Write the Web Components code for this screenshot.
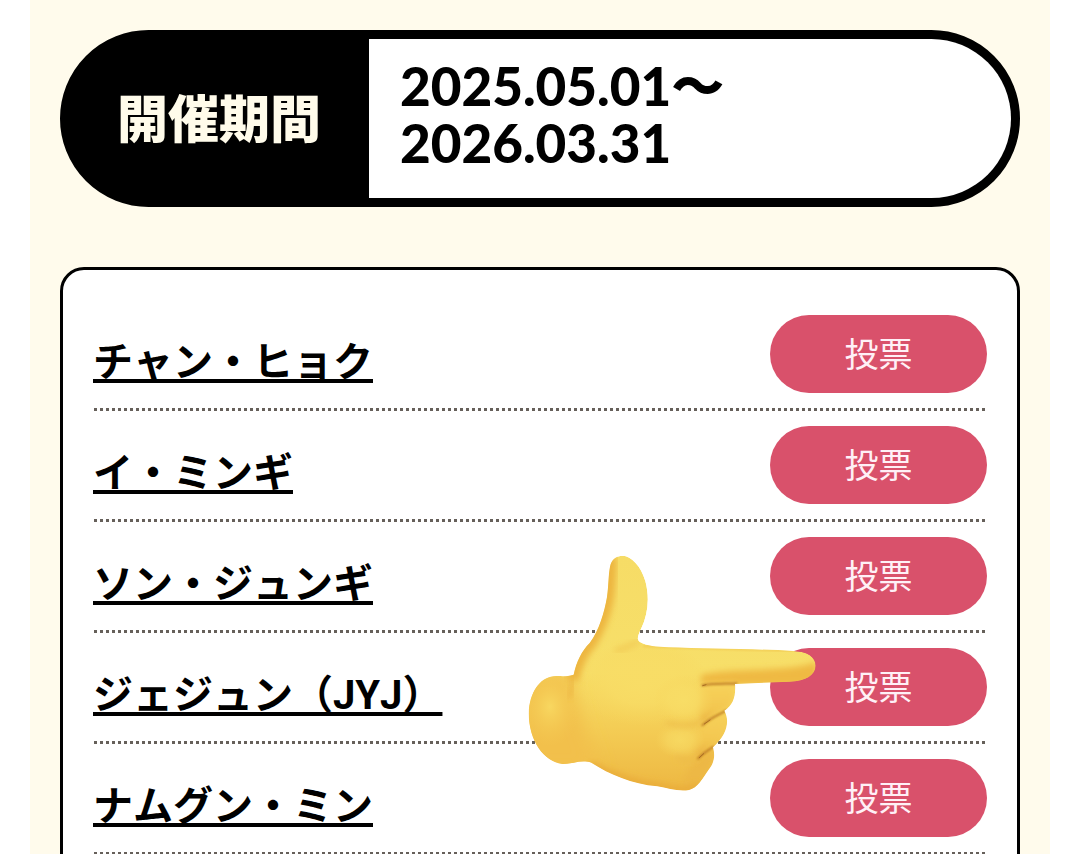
<!DOCTYPE html>
<html lang="ja">
<head>
<meta charset="utf-8">
<meta name="viewport" content="width=device-width, initial-scale=1">
<title>投票</title>
<style>
  body { margin: 0; background: #fff; color: #000; font-family: "Noto Sans CJK JP", sans-serif; }
</style>
</head>
<body>
<vote-page>
  <event-period label="開催期間">2025.05.01〜<br>2026.03.31</event-period>
  <vote-list>
    <vote-row>チャン・ヒョク</vote-row>
    <vote-row>イ・ミンギ</vote-row>
    <vote-row>ソン・ジュンギ</vote-row>
    <vote-row>ジェジュン（JYJ）</vote-row>
    <vote-row>ナムグン・ミン</vote-row>
    <pointing-hand slot="overlay"></pointing-hand>
  </vote-list>
</vote-page>
<script>
  const define = (name, html, setup) => customElements.define(name, class extends HTMLElement {
    constructor() {
      super();
      this.attachShadow({ mode: "open" }).innerHTML = html;
    }
    connectedCallback() { if (setup) setup(this, this.shadowRoot); }
  });

  define("vote-page", `
    <style>
      :host { display: block; height: 100vh; overflow: hidden; }
      main { box-sizing: border-box; min-height: 100%; margin: 0 29px 0 30px; padding: 30px;
        background: #fffbec; display: flex; flex-direction: column; gap: 60px; }
    </style>
    <main><slot></slot></main>`);

  define("event-period", `
    <style>
      :host { display: block; }
      dl { margin: 0; display: flex; border: 9px solid #000; border-radius: 90px; background: #000; }
      dt { display: flex; align-items: center; padding: 0 48px 6px; color: #fffbea;
        font-size: 51px; font-weight: 900; line-height: 60px; white-space: nowrap; }
      dd { flex: 1; margin: 0; padding: 18px 31px 27px; border-radius: 0 81px 81px 0; background: #fff;
        font: 900 53px/57px Lato, "Noto Sans CJK JP", sans-serif; }
    </style>
    <dl><dt></dt><dd><slot></slot></dd></dl>`,
    (el, root) => { root.querySelector("dt").textContent = el.getAttribute("label"); });

  define("vote-list", `
    <style>
      :host { display: block; position: relative; box-sizing: border-box; border: 3px solid #000;
        border-radius: 24px; background: #fff; padding: 30px; }
    </style>
    <div role="list"><slot></slot></div>
    <slot name="overlay"></slot>`);

  define("vote-row", `
    <style>
      :host { display: block; }
      .row { display: flex; align-items: center; justify-content: space-between; padding: 15px 0 18px;
        background: repeating-linear-gradient(90deg, transparent 0 1px, #66605a 1px 4px, transparent 4px 6px) bottom / 100% 3px no-repeat; }
      a { padding-top: 18px; color: #000; font: 700 40px/60px Roboto, "Noto Sans CJK JP", sans-serif; font-kerning: none;
        text-decoration: underline; text-decoration-thickness: 4px; text-underline-offset: 3px; text-decoration-skip-ink: none; }
      button { width: 217px; height: 78px; padding: 0 0 2px; border: 0; border-radius: 39px; background: #d9516b;
        color: #fff0f6; font: 400 34px/48px "Noto Sans CJK JP", sans-serif; cursor: pointer; }
    </style>
    <div class="row" role="listitem"><a href="#"><slot></slot></a><button type="button">投票</button></div>`);

  define("pointing-hand", `
    <style>
      :host { position: absolute; top: 270px; right: 167px; width: 350px; height: 270px; pointer-events: none; }
      svg { display: block; width: 100%; height: 100%; }
    </style>
    <svg viewBox="0 0 1050 810" aria-hidden="true">
      <defs>
        <linearGradient id="skin" x1="0" y1="0" x2="0" y2="1">
          <stop offset="0" stop-color="#f6dc66"/><stop offset=".5" stop-color="#f7df69"/>
          <stop offset=".73" stop-color="#f4cd55"/><stop offset="1" stop-color="#edb742"/>
        </linearGradient>
        <radialGradient id="wrist"><stop offset="0" stop-color="#f8d760"/><stop offset="1" stop-color="#f4c952" stop-opacity="0"/></radialGradient>
        <radialGradient id="glow"><stop offset="0" stop-color="#f8dd66"/><stop offset=".5" stop-color="#f8dc65" stop-opacity=".7"/><stop offset="1" stop-color="#f7d65d" stop-opacity="0"/></radialGradient>
        <linearGradient id="finger" x1="0" y1="0" x2="0" y2="1">
          <stop offset="0" stop-color="#f7d25a"/><stop offset=".65" stop-color="#f3c64f"/><stop offset="1" stop-color="#e5a73b"/>
        </linearGradient>
        <filter id="s8" x="-20%" y="-20%" width="140%" height="140%"><feGaussianBlur stdDeviation="9"/></filter>
        <filter id="s16" x="-30%" y="-30%" width="160%" height="160%"><feGaussianBlur stdDeviation="26"/></filter>
        <filter id="s3" x="-20%" y="-20%" width="140%" height="140%"><feGaussianBlur stdDeviation="3"/></filter>
        <path id="hand" d="M330 80C334 58 349 47 368 47C394 48 423 78 436 123C450 176 443 224 424 265C414 287 408 299 421 307C440 318 469 321 506 322C620 326 770 326 880 333C923 334 947 352 947 377C946 404 919 423 868 425L705 432C708 468 700 495 673 512C689 540 684 583 639 622C646 646 643 668 627 688C607 717 593 744 567 750C537 756 505 745 472 739C394 731 330 704 274 668C241 658 218 673 187 672C132 665 87 604 86 520C89 457 119 414 160 409C180 407 201 411 221 404C229 365 245 333 269 309C298 270 313 216 321 171C326 137 325 104 330 80Z"/>
        <clipPath id="clip"><use href="#hand"/></clipPath>
      </defs>
      <g clip-path="url(#clip)">
        <use href="#hand" fill="url(#skin)"/>
        <path d="M60 395H215C215 470 260 590 300 700H60Z" fill="#f2c04b" filter="url(#s16)"/>
        <ellipse cx="150" cy="500" rx="90" ry="120" fill="url(#wrist)"/>
        <path d="M330 50C326 160 323 220 269 309C246 333 229 365 216 420" fill="none" stroke="#edb641" stroke-width="42" filter="url(#s8)"/>
        <ellipse cx="430" cy="430" rx="200" ry="130" fill="url(#glow)"/>
        <path d="M218 412C220 440 214 458 206 474" fill="none" stroke="#e9ac3a" stroke-width="8" filter="url(#s8)"/>
        <path d="M345 332C370 328 398 314 418 303" fill="none" stroke="#efc34e" stroke-width="10" filter="url(#s8)"/>
        <path d="M603 404C700 380 850 400 950 366V435H603Z" fill="#efb943" filter="url(#s8)"/>
        <path d="M430 318L880 333" fill="none" stroke="#f3cd54" stroke-width="7" filter="url(#s3)"/>
        <path d="M607 434L706 431C708 468 701 494 673 512C650 525 628 536 609 555C590 520 590 470 607 434Z" fill="url(#finger)" filter="url(#s8)"/>
        <path d="M607 556C630 536 655 524 674 513C693 555 673 592 638 622C620 632 606 643 592 657C585 620 585 585 607 556Z" fill="url(#finger)" filter="url(#s8)"/>
        <path d="M592 658L639 622C650 660 630 690 610 715C598 742 575 755 550 753C550 700 570 680 592 658Z" fill="#edb845" filter="url(#s8)"/>
        <ellipse cx="550" cy="480" rx="90" ry="75" fill="url(#glow)"/>
        <ellipse cx="540" cy="600" rx="75" ry="55" fill="url(#glow)" opacity=".75"/>
        <path d="M500 549C535 559 570 561 602 546M530 650C555 664 575 664 590 652" fill="none" stroke="#ecba47" stroke-width="10" filter="url(#s8)"/>
        <path d="M607 436C640 428 685 432 710 430M607 556C630 533 657 524 680 511M594 656C609 639 624 632 640 620" fill="none" stroke="#b87520" stroke-width="5" stroke-linecap="round" filter="url(#s3)"/>
        <path d="M608 437L618 434M613 552L630 540M598 653L611 641" fill="none" stroke="#a86c22" stroke-width="3" stroke-linecap="round"/>
        <path d="M272 672C340 708 405 731 480 739C540 757 573 752 594 735" fill="none" stroke="#e9aa38" stroke-width="17" filter="url(#s8)"/>
      </g>
    </svg>`);
</script>
</body>
</html>
